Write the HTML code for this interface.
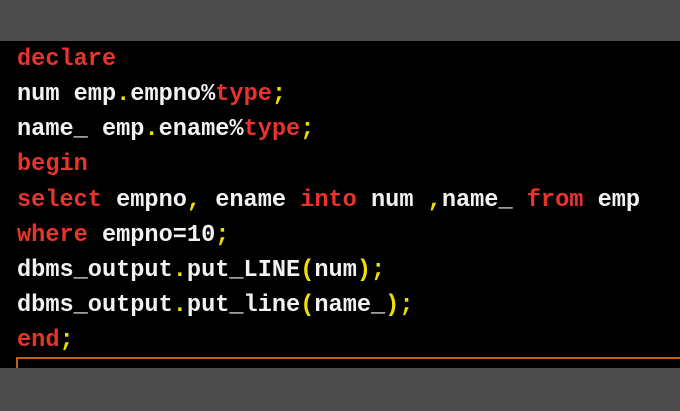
<!DOCTYPE html>
<html><head><style>
html,body{margin:0;padding:0;}
body{width:680px;height:411px;background:#4b4b4b;position:relative;overflow:hidden;}
#code{position:absolute;left:0;top:41px;width:680px;height:327px;background:#000;overflow:hidden;}
.l{position:absolute;left:17px;font-family:"Liberation Mono",monospace;font-size:23.6px;line-height:30px;color:#f2f2f2;white-space:pre;font-weight:bold;}
.r{color:#e8342c;}.y{color:#f0e000;}
#box{position:absolute;left:16px;top:316px;width:680px;height:20px;border-top:2px solid #c0600a;border-left:2px solid #c0600a;}
</style></head><body>
<div id="code">
<div class="l" style="top:4px"><span class="r">declare</span></div>
<div class="l" style="top:39px">num emp<span class="y">.</span>empno%<span class="r">type</span><span class="y">;</span></div>
<div class="l" style="top:74px">name_ emp<span class="y">.</span>ename%<span class="r">type</span><span class="y">;</span></div>
<div class="l" style="top:109px"><span class="r">begin</span></div>
<div class="l" style="top:145px"><span class="r">select</span> empno<span class="y">,</span> ename <span class="r">into</span> num <span class="y">,</span>name_ <span class="r">from</span> emp</div>
<div class="l" style="top:180px"><span class="r">where</span> empno=10<span class="y">;</span></div>
<div class="l" style="top:215px">dbms_output<span class="y">.</span>put_LINE<span class="y">(</span>num<span class="y">);</span></div>
<div class="l" style="top:250px">dbms_output<span class="y">.</span>put_line<span class="y">(</span>name_<span class="y">);</span></div>
<div class="l" style="top:285px"><span class="r">end</span><span class="y">;</span></div>
<div id="box"></div>
</div>
</body></html>
